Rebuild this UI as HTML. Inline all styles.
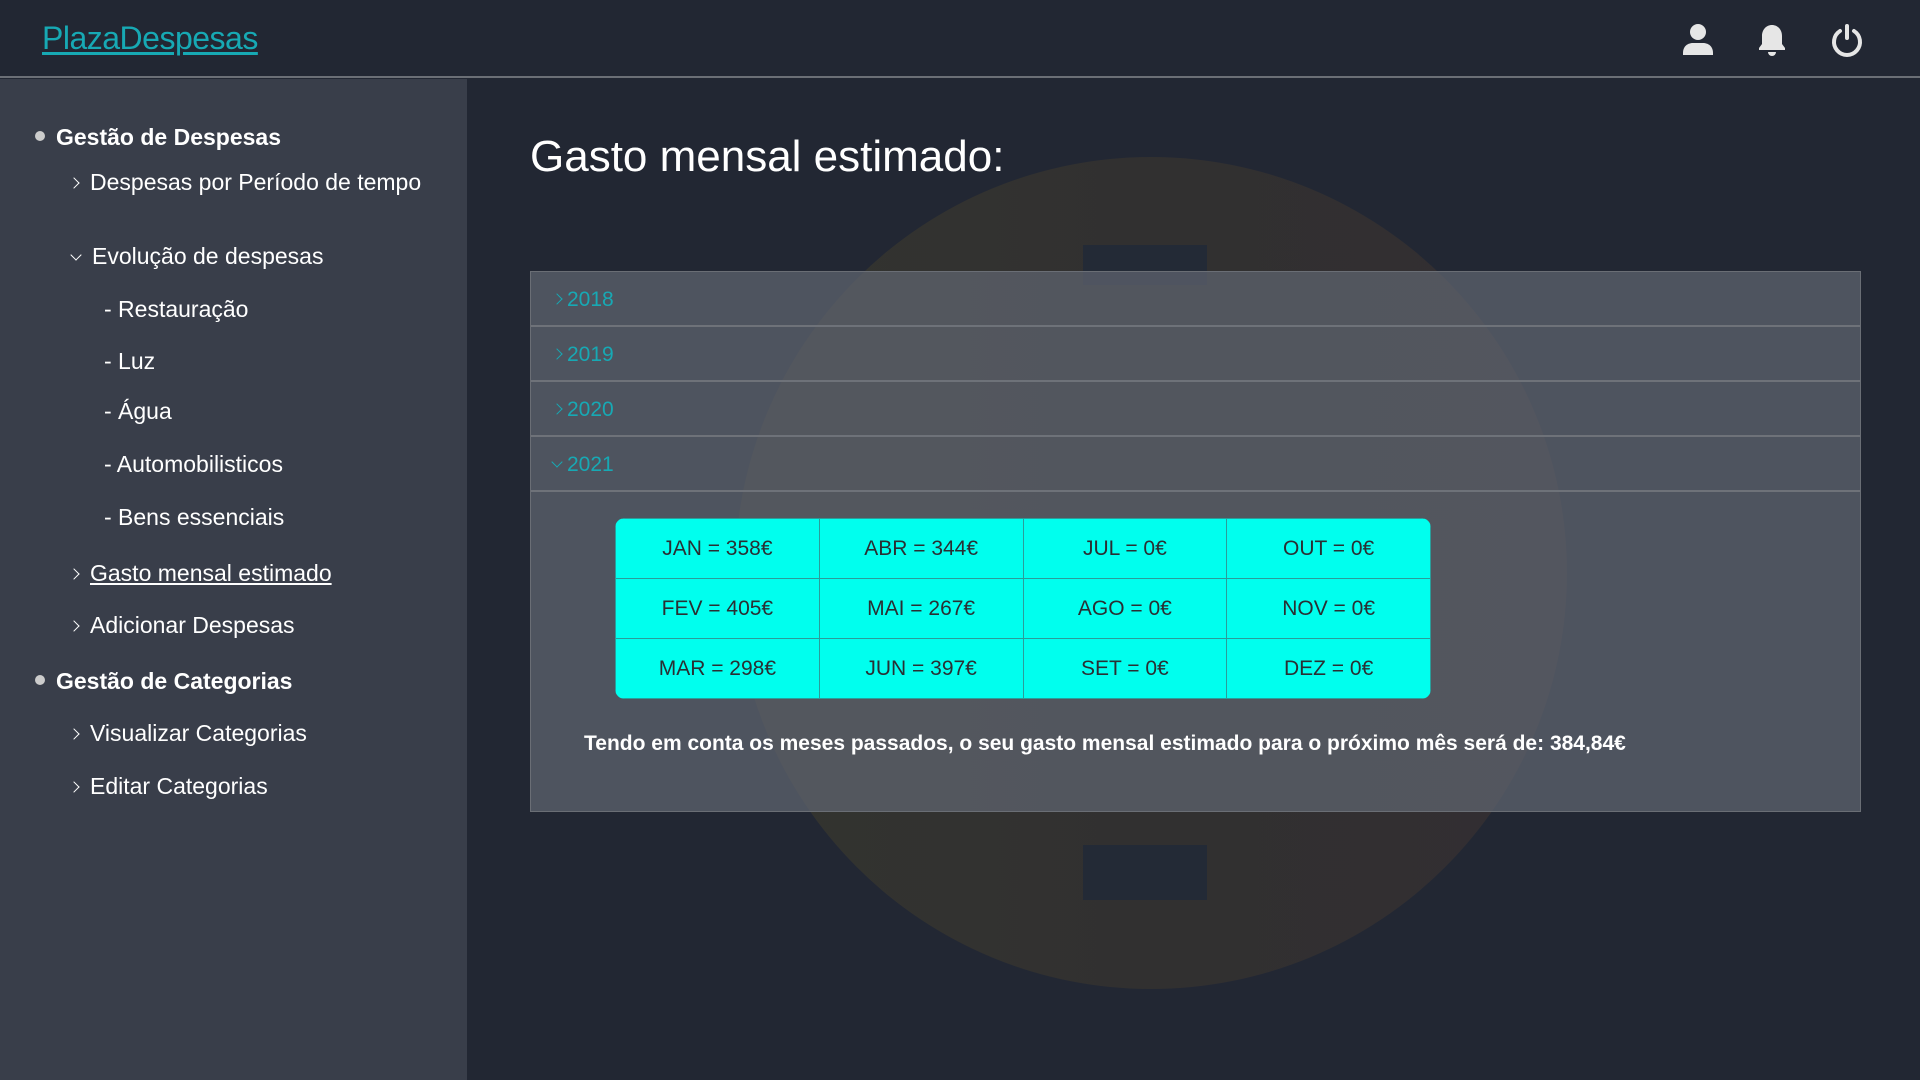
<!DOCTYPE html>
<html><head><meta charset="utf-8"><style>
*{margin:0;padding:0;box-sizing:border-box}
body{width:1920px;height:1080px;background:#222733;font-family:"Liberation Sans",sans-serif;position:relative;overflow:hidden;color:#fff}
.hdr{position:absolute;left:0;top:0;width:1920px;height:78px;background:#222733;border-bottom:2px solid #6b6f76}
.logo{position:absolute;left:42px;top:20px;font-size:32px;color:#17a9b4;text-decoration:underline;text-underline-offset:3px;letter-spacing:-0.5px}
.ico{position:absolute;top:23px}
.side{position:absolute;left:0;top:79px;width:467px;height:1001px;background:#393e4a}
.si{position:absolute;font-size:23px;color:#fff;white-space:nowrap}
.b{font-weight:bold}
.dot{position:absolute;width:10px;height:10px;border-radius:50%;background:#ccc}
.chev{display:inline-block;width:8px;height:8px;border-right:1.5px solid #fff;border-top:1.5px solid #fff;transform:rotate(45deg);margin-right:12px;position:relative;top:-3px}
.chd{transform:rotate(135deg);top:-5px}
.wm{position:absolute;left:735px;top:157px;width:832px;height:832px;border-radius:50%;background:linear-gradient(90deg,#33342f,#313030 50%,#322e32)}
.bar1{position:absolute;left:1083px;top:245px;width:124px;height:40px;background:#232a36}
.bar2{position:absolute;left:1083px;top:845px;width:124px;height:55px;background:#232a36}
h1{position:absolute;left:530px;top:132px;font-size:44px;font-weight:normal;color:#fff}
.panel{position:absolute;left:530px;top:271px;width:1331px;height:541px;background:rgba(95,100,110,0.74);border:1px solid #6a6e75}
.row{height:55px;border-bottom:2px solid #6e7279;color:#17a9b4;font-size:21px;line-height:55px;padding-left:22px}
.row .chev{border-color:#17a9b4;width:8px;height:8px;margin-right:6px}
table{position:absolute;left:84px;top:246px;width:816px;border-collapse:collapse;background:#00ffee;border-radius:10px;overflow:hidden}
td{width:204px;height:60px;border:1px solid #2a9d9a;color:#2a2f33;font-size:21px;text-align:center}
.sum{position:absolute;left:53px;top:460px;font-size:21px;font-weight:bold;color:#fff}
</style></head><body>
<div class="hdr"><a class="logo">PlazaDespesas</a>
<svg class="ico" style="left:1682px" width="32" height="34" viewBox="0 0 32 34"><circle cx="16" cy="9" r="8" fill="#e6e6e6"/><path d="M1 30c0-7 5-10 10-10h10c5 0 10 3 10 10v2H1z" fill="#e6e6e6"/></svg>
<svg class="ico" style="left:1757px" width="30" height="34" viewBox="0 0 30 34"><path d="M15 2c-6 0-10 5-10 11v8l-3 4v2h26v-2l-3-4v-8C25 7 21 2 15 2z" fill="#e6e6e6"/><path d="M11 29h8a4 4 0 0 1-8 0z" fill="#e6e6e6"/></svg>
<svg class="ico" style="left:1831px" width="32" height="34" viewBox="0 0 32 34"><path d="M9 8a13 13 0 1 0 14 0" fill="none" stroke="#e6e6e6" stroke-width="4" stroke-linecap="round"/><line x1="16" y1="3" x2="16" y2="15" stroke="#e6e6e6" stroke-width="4" stroke-linecap="round"/></svg>
</div>
<div class="side">
<div class="dot" style="left:35px;top:52px"></div>
<div class="si b" style="left:56px;top:45px">Gestão de Despesas</div>
<div class="si" style="left:70px;top:90px"><span class="chev"></span>Despesas por Período de tempo</div>
<div class="si" style="left:72px;top:164px"><span class="chev chd"></span>Evolução de despesas</div>
<div class="si" style="left:104px;top:217px">- Restauração</div>
<div class="si" style="left:104px;top:269px">- Luz</div>
<div class="si" style="left:104px;top:319px">- Água</div>
<div class="si" style="left:104px;top:372px">- Automobilisticos</div>
<div class="si" style="left:104px;top:425px">- Bens essenciais</div>
<div class="si" style="left:70px;top:481px"><span class="chev"></span><u>Gasto mensal estimado</u></div>
<div class="si" style="left:70px;top:533px"><span class="chev"></span>Adicionar Despesas</div>
<div class="dot" style="left:35px;top:596px"></div>
<div class="si b" style="left:56px;top:589px">Gestão de Categorias</div>
<div class="si" style="left:70px;top:641px"><span class="chev"></span>Visualizar Categorias</div>
<div class="si" style="left:70px;top:694px"><span class="chev"></span>Editar Categorias</div>
</div>
<div class="wm"></div><div class="bar1"></div><div class="bar2"></div>
<h1>Gasto mensal estimado:</h1>
<div class="panel">
<div class="row"><span class="chev"></span>2018</div>
<div class="row"><span class="chev"></span>2019</div>
<div class="row"><span class="chev"></span>2020</div>
<div class="row"><span class="chev chd"></span>2021</div>
<table>
<tr><td>JAN = 358€</td><td>ABR = 344€</td><td>JUL = 0€</td><td>OUT = 0€</td></tr>
<tr><td>FEV = 405€</td><td>MAI = 267€</td><td>AGO = 0€</td><td>NOV = 0€</td></tr>
<tr><td style="height:56px">MAR = 298€</td><td>JUN = 397€</td><td>SET = 0€</td><td>DEZ = 0€</td></tr>
</table>
<div class="sum">Tendo em conta os meses passados, o seu gasto mensal estimado para o próximo mês será de: 384,84€</div>
</div>
</body></html>
